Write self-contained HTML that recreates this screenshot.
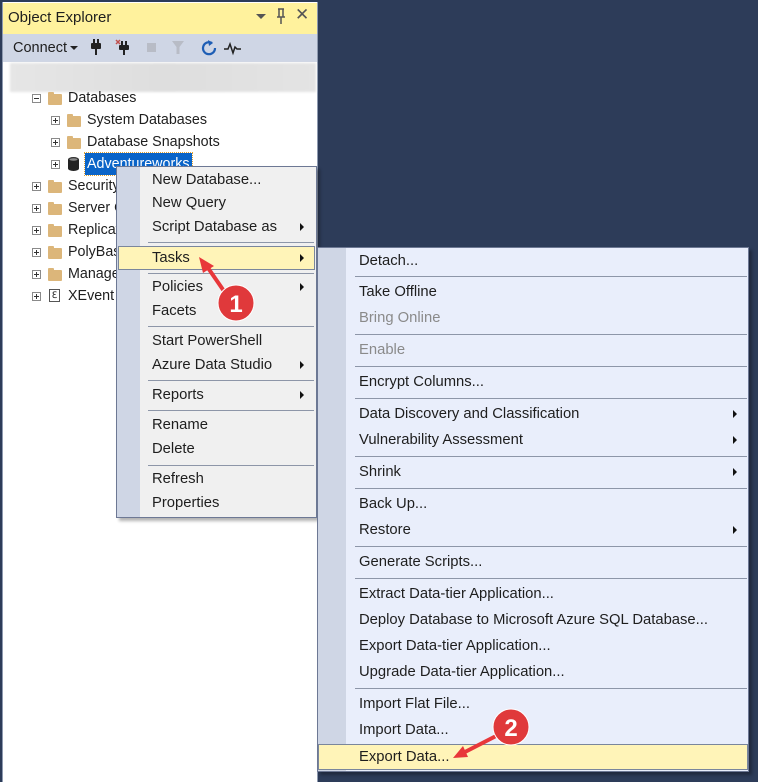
<!DOCTYPE html>
<html><head><meta charset="utf-8"><style>
*{margin:0;padding:0;box-sizing:border-box}
body{width:758px;height:782px;background:#2d3c59;position:relative;overflow:hidden;font-family:"Segoe UI","Liberation Sans","DejaVu Sans",sans-serif;font-size:14.3px;color:#1e1e1e}
.a{position:absolute;white-space:nowrap}
.t{line-height:22px}
.box{position:absolute;width:9px;height:9px;border:1px solid #8a8a8a;background:#fff}
.box:before{content:"";position:absolute;left:1px;top:3px;width:5px;height:1px;background:#333}
.box.p:after{content:"";position:absolute;left:3px;top:1px;width:1px;height:5px;background:#333}
.fold{position:absolute;width:14px;height:11px;background:#dcb67a;border-radius:1px}
.fold:before{content:"";position:absolute;left:0;top:-2px;width:6px;height:3px;background:#dcb67a;border-radius:1px 1px 0 0}
.sep{position:absolute;height:1px;background:#8d96a8}
.arr{position:absolute;width:0;height:0;border-top:4px solid transparent;border-bottom:4px solid transparent;border-left:4px solid #111}
.mi{position:absolute;line-height:24px;white-space:nowrap;font-size:14.8px}
</style></head><body>
<div class="a" style="left:2px;top:2px;width:316px;height:780px;background:#fff;border-left:1px solid #8e9ab0;border-right:1px solid #8e9ab0"></div>
<div class="a" style="left:3px;top:3px;width:314px;height:31px;background:#fff29d"></div>
<div class="a" style="left:8px;top:7px;font-size:15px;line-height:22px;color:#1e1e1e">Object Explorer</div>
<div class="a" style="left:256px;top:14px;border-left:5px solid transparent;border-right:5px solid transparent;border-top:5px solid #555;width:0;height:0"></div>
<svg class="a" style="left:275px;top:8px" width="12" height="18"><path d="M3 1h6M4 1v8M8 1v8M2 9h8M6 9v7" stroke="#555" stroke-width="1.5" fill="none"/></svg>
<div class="a" style="left:295px;top:5px;font-size:17px;color:#555">✕</div>
<div class="a" style="left:3px;top:34px;width:314px;height:28px;background:#cfd6e5"></div>
<div class="a" style="left:13px;top:37px;font-size:14.5px;line-height:22px">Connect</div>
<div class="a" style="left:70px;top:46px;border-left:4px solid transparent;border-right:4px solid transparent;border-top:4px solid #222;width:0;height:0"></div>
<svg class="a" style="left:88px;top:38px" width="160" height="20">
<g fill="#222"><rect x="5" y="1" width="2" height="5"/><rect x="9" y="1" width="2" height="5"/><rect x="3" y="5" width="10" height="6" rx="1"/><rect x="7" y="11" width="2" height="6"/></g>
<path d="M28 2l4 4M32 2l-4 4" stroke="#c0504d" stroke-width="1.5"/>
<g fill="#222"><rect x="33" y="3" width="2" height="4"/><rect x="37" y="3" width="2" height="4"/><rect x="31" y="7" width="10" height="5" rx="1"/><rect x="35" y="12" width="2" height="5"/></g>
<rect x="59" y="5" width="9" height="9" fill="#b8bcc6"/>
<path d="M84 3h12l-4.5 6v7h-3v-7z" fill="#b8bcc6"/>
<path d="M124 5a6 6 0 1 0 3 5" fill="none" stroke="#1e5eb5" stroke-width="2.2"/><path d="M120 2l5 3-4 3z" fill="#1e5eb5"/>
<path d="M136 11h4l2-5 3 9 2-6 2 2h4" fill="none" stroke="#222" stroke-width="1.5"/>
</svg>
<div class="a" style="left:10px;top:63px;width:306px;height:29px;background:linear-gradient(90deg,#e6e6e6,#dedede 50%,#e4e4e4);filter:blur(1px)"></div>
<div class="box" style="left:32px;top:94px"></div><div class="fold" style="left:48px;top:94px"></div><div class="a t" style="left:68px;top:87px">Databases</div>
<div class="box p" style="left:51px;top:116px"></div><div class="fold" style="left:67px;top:116px"></div><div class="a t" style="left:87px;top:109px">System Databases</div>
<div class="box p" style="left:51px;top:138px"></div><div class="fold" style="left:67px;top:138px"></div><div class="a t" style="left:87px;top:131px">Database Snapshots</div>
<div class="box p" style="left:51px;top:160px"></div>
<svg class="a" style="left:67px;top:156px" width="13" height="16"><ellipse cx="6.5" cy="3.5" rx="5.5" ry="2.5" fill="#333"/><rect x="1" y="3.5" width="11" height="9" fill="#222"/><ellipse cx="6.5" cy="12.5" rx="5.5" ry="2.5" fill="#222"/><ellipse cx="6.5" cy="3.5" rx="4" ry="1.3" fill="#888"/></svg>
<div class="a t" style="left:85px;top:153px;background:#0a64c8;color:#fff;padding:0 2px;outline:1px dotted #e0a030;height:22px">Adventureworks</div>
<div class="box p" style="left:32px;top:182px"></div><div class="fold" style="left:48px;top:182px"></div><div class="a t" style="left:68px;top:175px">Security</div>
<div class="box p" style="left:32px;top:204px"></div><div class="fold" style="left:48px;top:204px"></div><div class="a t" style="left:68px;top:197px">Server Objects</div>
<div class="box p" style="left:32px;top:226px"></div><div class="fold" style="left:48px;top:226px"></div><div class="a t" style="left:68px;top:219px">Replication</div>
<div class="box p" style="left:32px;top:248px"></div><div class="fold" style="left:48px;top:248px"></div><div class="a t" style="left:68px;top:241px">PolyBase</div>
<div class="box p" style="left:32px;top:270px"></div><div class="fold" style="left:48px;top:270px"></div><div class="a t" style="left:68px;top:263px">Management</div>
<div class="box p" style="left:32px;top:292px"></div><div class="a" style="left:49px;top:289px;width:11px;height:13px;border:1px solid #555;font-size:9px;line-height:11px;text-align:center">ℇ</div><div class="a t" style="left:68px;top:285px">XEvent Profiler</div>

<div class="a" style="left:116px;top:166px;width:201px;height:352px;background:#f0f0f0;border:1px solid #6d7894;box-shadow:3px 3px 3px rgba(0,0,0,.3)"></div>
<div class="a" style="left:117px;top:167px;width:23px;height:350px;background:#cfd6e5"></div>
<div class="mi" style="left:152px;top:168px">New Database...</div>
<div class="mi" style="left:152px;top:191px">New Query</div>
<div class="mi" style="left:152px;top:215px">Script Database as</div><div class="arr" style="left:300px;top:223px"></div>
<div class="sep" style="left:148px;top:242px;width:166px"></div>
<div class="a" style="left:118px;top:246px;width:197px;height:24px;background:#fff4b8;border:1px solid #7a869c"></div>
<div class="mi" style="left:152px;top:246px">Tasks</div><div class="arr" style="left:300px;top:254px"></div>
<div class="sep" style="left:148px;top:273px;width:166px"></div>
<div class="mi" style="left:152px;top:275px">Policies</div><div class="arr" style="left:300px;top:283px"></div>
<div class="mi" style="left:152px;top:299px">Facets</div>
<div class="sep" style="left:148px;top:326px;width:166px"></div>
<div class="mi" style="left:152px;top:329px">Start PowerShell</div>
<div class="mi" style="left:152px;top:353px">Azure Data Studio</div><div class="arr" style="left:300px;top:361px"></div>
<div class="sep" style="left:148px;top:380px;width:166px"></div>
<div class="mi" style="left:152px;top:383px">Reports</div><div class="arr" style="left:300px;top:391px"></div>
<div class="sep" style="left:148px;top:410px;width:166px"></div>
<div class="mi" style="left:152px;top:413px">Rename</div>
<div class="mi" style="left:152px;top:437px">Delete</div>
<div class="sep" style="left:148px;top:465px;width:166px"></div>
<div class="mi" style="left:152px;top:467px">Refresh</div>
<div class="mi" style="left:152px;top:491px">Properties</div>

<div class="a" style="left:317px;top:247px;width:432px;height:525px;background:#e9eefb;border:1px solid #6d7894;box-shadow:3px 3px 3px rgba(0,0,0,.3)"></div>
<div class="a" style="left:318px;top:248px;width:28px;height:523px;background:#cfd6e5"></div>
<div class="mi" style="left:359px;top:249px">Detach...</div>
<div class="sep" style="left:355px;top:276px;width:392px"></div>
<div class="mi" style="left:359px;top:280px">Take Offline</div>
<div class="mi" style="left:359px;top:306px;color:#8a8a8a">Bring Online</div>
<div class="sep" style="left:355px;top:334px;width:392px"></div>
<div class="mi" style="left:359px;top:338px;color:#8a8a8a">Enable</div>
<div class="sep" style="left:355px;top:366px;width:392px"></div>
<div class="mi" style="left:359px;top:370px">Encrypt Columns...</div>
<div class="sep" style="left:355px;top:398px;width:392px"></div>
<div class="mi" style="left:359px;top:402px">Data Discovery and Classification</div><div class="arr" style="left:733px;top:410px"></div>
<div class="mi" style="left:359px;top:428px">Vulnerability Assessment</div><div class="arr" style="left:733px;top:436px"></div>
<div class="sep" style="left:355px;top:456px;width:392px"></div>
<div class="mi" style="left:359px;top:460px">Shrink</div><div class="arr" style="left:733px;top:468px"></div>
<div class="sep" style="left:355px;top:488px;width:392px"></div>
<div class="mi" style="left:359px;top:492px">Back Up...</div>
<div class="mi" style="left:359px;top:518px">Restore</div><div class="arr" style="left:733px;top:526px"></div>
<div class="sep" style="left:355px;top:546px;width:392px"></div>
<div class="mi" style="left:359px;top:550px">Generate Scripts...</div>
<div class="sep" style="left:355px;top:578px;width:392px"></div>
<div class="mi" style="left:359px;top:582px">Extract Data-tier Application...</div>
<div class="mi" style="left:359px;top:608px">Deploy Database to Microsoft Azure SQL Database...</div>
<div class="mi" style="left:359px;top:634px">Export Data-tier Application...</div>
<div class="mi" style="left:359px;top:660px">Upgrade Data-tier Application...</div>
<div class="sep" style="left:355px;top:688px;width:392px"></div>
<div class="mi" style="left:359px;top:692px">Import Flat File...</div>
<div class="mi" style="left:359px;top:718px">Import Data...</div>
<div class="a" style="left:318px;top:744px;width:430px;height:26px;background:#fff4b8;border:1px solid #7a869c"></div>
<div class="mi" style="left:359px;top:745px">Export Data...</div>

<svg class="a" style="left:0;top:0" width="758" height="782">
<path d="M226 294 L206 265" stroke="#e8373a" stroke-width="4"/><path d="M199 257 L214 266 L203 273z" fill="#e8373a"/>
<path d="M498 735 L463 753" stroke="#e8373a" stroke-width="4"/><path d="M453 758 L463 746 L468 757z" fill="#e8373a"/>
<circle cx="236" cy="303" r="18" fill="#e0393b" stroke="#fff" stroke-width="1"/>
<text x="236" y="312" font-family="Liberation Sans,sans-serif" font-weight="bold" font-size="24" fill="#fff" text-anchor="middle">1</text>
<circle cx="511" cy="727" r="18" fill="#e0393b" stroke="#fff" stroke-width="1"/>
<text x="511" y="736" font-family="Liberation Sans,sans-serif" font-weight="bold" font-size="24" fill="#fff" text-anchor="middle">2</text>
</svg>
</body></html>
